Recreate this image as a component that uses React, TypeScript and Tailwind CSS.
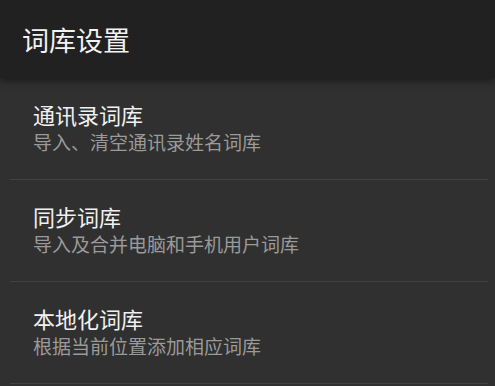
import React from 'react';

const items = [
  { title: '通讯录词库', desc: '导入、清空通讯录姓名词库' },
  { title: '同步词库', desc: '导入及合并电脑和手机用户词库' },
  { title: '本地化词库', desc: '根据当前位置添加相应词库' },
];

export default function App() {
  return (
    <div
      className="w-[495px] h-[386px] overflow-hidden bg-[#303030]"
      style={{ fontFamily: '"Noto Sans CJK SC", "Noto Sans", sans-serif' }}
    >
      {/* Header */}
      <div className="relative z-10 h-[78px] bg-[#212121] flex items-center pl-[22px] shadow-[0_3px_8px_rgba(0,0,0,0.45)]">
        <h1 className="text-[27px] leading-none text-[#f2f2f2]">词库设置</h1>
      </div>

      {/* List */}
      <div>
        {items.map((item) => (
          <div key={item.title} className="ml-[10px] mr-[7px] border-b border-[#414141]">
            <div className="pl-[23px] pt-[22px] pb-[25px]">
              <div className="text-[22px] leading-[28px] text-[#f0f0f0]">{item.title}</div>
              <div className="mt-[2px] text-[19px] leading-[24px] text-[#9a9a9a]">{item.desc}</div>
            </div>
          </div>
        ))}
      </div>
    </div>
  );
}
